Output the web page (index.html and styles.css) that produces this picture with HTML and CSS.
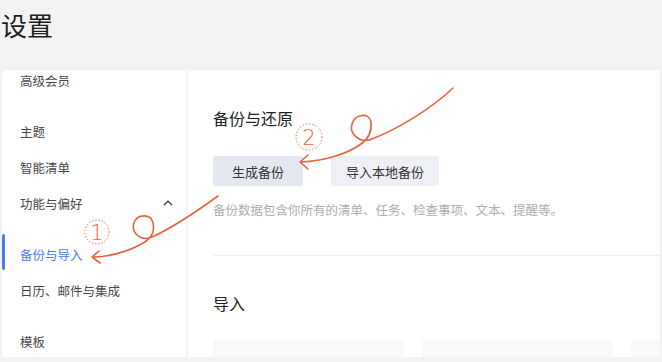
FILE: index.html
```html
<!DOCTYPE html>
<html lang="zh-CN">

<head>
    <meta charset="UTF-8">
    <meta name="viewport" content="width=device-width, initial-scale=1.0">
    <title>设置</title>
    <link rel="stylesheet" href="styles.css">
</head>

<body>
    <div class="page">
        <h1 class="page-title">设置</h1>

        <div class="panel">
            <div class="sidebar">
                <ul class="menu-group first">
                    <li class="menu-item">高级会员</li>
                </ul>
                <ul class="menu-group">
                    <li class="menu-item">主题</li>
                    <li class="menu-item">智能清单</li>
                    <li class="menu-item has-sub">
                        <span>功能与偏好</span>
                        <svg class="chevron" width="10" height="6" viewBox="0 0 10 6">
                            <polyline points="1,5 5,1 9,5" fill="none" stroke="#333" stroke-width="1.2" />
                        </svg>
                    </li>
                </ul>
                <ul class="menu-group">
                    <li class="menu-item active">备份与导入</li>
                    <li class="menu-item">日历、邮件与集成</li>
                </ul>
                <ul class="menu-group">
                    <li class="menu-item">模板</li>
                </ul>
            </div>

            <div class="content">
                <h2 class="section-title">备份与还原</h2>
                <div class="button-row">
                    <button class="btn hover">生成备份</button>
                    <button class="btn">导入本地备份</button>
                </div>
                <p class="hint">备份数据包含你所有的清单、任务、检查事项、文本、提醒等。</p>

                <div class="divider"></div>

                <h2 class="section-title">导入</h2>
                <div class="import-cards">
                    <div class="card"></div>
                    <div class="card"></div>
                    <div class="card"></div>
                </div>
            </div>
        </div>

        <!-- annotation arrows drawn over the screenshot -->
        <svg class="marks" width="662" height="362" viewBox="0 0 662 362">
            <g fill="none" stroke="#e8633e" stroke-width="1.6" stroke-linecap="round" stroke-linejoin="round">
                <path d="M218,196 C196,212 172,228 152,237 C140,242 131,232 134,223 C137,214 151,213 153,223 C155,232 151,238 145,242 C130,251 110,257 93,257" />
                <path d="M99,251 L92,257 L100,263" />
                <path d="M453,88 C432,108 400,128 372,139 C360,144 349,134 352,124 C355,114 369,112 371,122 C372,131 368,139 361,144 C346,155 322,161 301,162" />
                <path d="M308,155 L300,162 L308,169" />
            </g>
            <g fill="none" stroke="#e8633e" stroke-width="1" stroke-dasharray="1.4 1.8">
                <circle cx="97" cy="232" r="12" />
                <circle cx="309" cy="137" r="13" />
            </g>
            <g fill="#e8633e" font-family="'DejaVu Sans', sans-serif" font-size="21" font-weight="300" text-anchor="middle">
                <text x="97" y="240">1</text>
                <text x="309" y="145">2</text>
            </g>
        </svg>
    </div>
</body>

</html>
```

FILE: styles.css
```css
/* page */
body {
    margin: 0;
    padding: 0;
    background-color: #f3f3f3;
    font-family: "Noto Sans CJK SC", "Liberation Sans", sans-serif;
    color: #333;
}

.page {
    position: relative;
    width: 662px;
    height: 362px;
    overflow: hidden;
}

.page-title {
    margin: 0;
    height: 70px;
    padding-left: 1px;
    font-size: 26px;
    font-weight: normal;
    line-height: 50px;
    color: #1f1f1f;
}

.panel {
    display: flex;
    margin-left: 2px;
    width: 658px;
    height: 287px;
    gap: 2px;
    overflow: hidden;
    border-top-left-radius: 6px;
}

/* sidebar */
.sidebar {
    width: 184px;
    flex-shrink: 0;
    background-color: #fff;
    overflow: hidden;
}

.menu-group {
    list-style: none;
    margin: 15px 0 0 0;
    padding: 0;
}

.menu-group.first {
    margin-top: -8px;
}

.menu-item {
    position: relative;
    display: flex;
    align-items: center;
    justify-content: space-between;
    height: 36px;
    padding: 0 13px 0 18px;
    font-size: 12.5px;
    color: #474747;
}

.menu-item.active {
    color: #4b7bf0;
}

.menu-item.active::before {
    content: "";
    position: absolute;
    left: 0;
    top: -2px;
    width: 3px;
    height: 36px;
    border-radius: 2px;
    background-color: #4b7bf0;
}

.chevron {
    display: block;
}

/* content */
.content {
    flex: 1;
    background-color: #fff;
    padding: 37px 0 0 25px;
    overflow: hidden;
}

.section-title {
    margin: 0;
    font-size: 16px;
    font-weight: normal;
    line-height: 22px;
    color: #222;
}

.button-row {
    display: flex;
    gap: 28px;
    margin-top: 27px;
}

.btn {
    height: 30px;
    padding: 0 15px;
    border: none;
    border-radius: 2px;
    background-color: #eef0f5;
    font-family: inherit;
    font-size: 13px;
    color: #333;
}

.btn.hover {
    width: 90px;
    background-color: #e4e8f0;
}

.hint {
    margin: 15px 0 0 0;
    font-size: 12.5px;
    line-height: 18px;
    color: #adadad;
    white-space: nowrap;
}

.divider {
    height: 1px;
    margin: 36px 0 36px 0;
    background-color: #f0f0f0;
}

.import-cards {
    display: flex;
    gap: 18px;
    margin-top: 26px;
}

.card {
    flex-shrink: 0;
    width: 191px;
    height: 60px;
    border-radius: 3px;
    background-color: #f8f9fb;
}

/* annotation layer */
.marks {
    position: absolute;
    left: 0;
    top: 0;
    pointer-events: none;
}
```
